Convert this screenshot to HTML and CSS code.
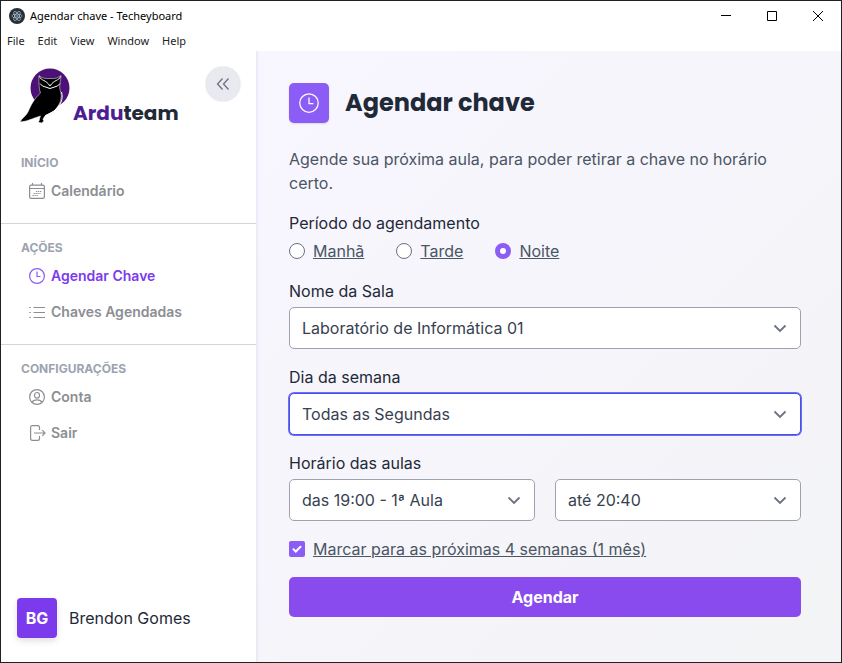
FILE: index.html
```html
<!DOCTYPE html>
<html lang="pt-BR">
<head>
<meta charset="utf-8">
<title>Agendar chave - Techeyboard</title>
<link rel="stylesheet" href="styles.css">
</head>
<body>
<svg class="sprite" aria-hidden="true">
  <symbol id="clock" viewBox="0 0 16 16"><circle cx="8" cy="8" r="7.4"/><path d="M8 3.5V8.5H11.5"/></symbol>
  <symbol id="chevron" viewBox="0 0 20 20"><path d="M4.5 7.5 10 13l5.500-5.500"/></symbol>
</svg>
<div class="window">
  <header class="titlebar">
    <svg class="app-icon" viewBox="0 0 16 16" aria-hidden="true">
      <circle class="app-disc" cx="8" cy="8" r="8"/>
      <g class="app-orbits"><ellipse cx="8" cy="8" rx="5.200" ry="2"/><ellipse cx="8" cy="8" rx="5.200" ry="2" transform="rotate(60 8 8)"/><ellipse cx="8" cy="8" rx="5.200" ry="2" transform="rotate(120 8 8)"/></g>
      <circle class="app-core" cx="8" cy="8" r=".8"/>
    </svg>
    <span class="window-title">Agendar chave - Techeyboard</span>
    <div class="window-controls">
      <button type="button" aria-label="Minimize"><svg viewBox="0 0 10 10"><path d="M0 4.500H10"/></svg></button>
      <button type="button" aria-label="Maximize"><svg viewBox="0 0 10 10"><path d="M.5.5h9v9h-9z"/></svg></button>
      <button type="button" aria-label="Close"><svg viewBox="0 0 10 10"><path d="M0 0 10 10M10 0 0 10"/></svg></button>
    </div>
  </header>
  <nav class="menubar" aria-label="Menu">
    <button type="button">File</button><button type="button">Edit</button><button type="button">View</button><button type="button">Window</button><button type="button">Help</button>
  </nav>
  <div class="body">
    <aside class="sidebar">
      <div class="brand">
        <svg class="owl" viewBox="0 0 50 56" aria-hidden="true">
          <circle cx="30" cy="20" r="19.500" fill="#4c1076"/>
          <path d="M19 7.500C22 10 25 11 30 10.500C35 11 38 10 41 7.500C41 11 40 13 40 15.500C39.500 19 39.500 21 41 25C42 32 39 38 34 43C30 46 27 46 25 48C23.500 50.500 22 51 24 53L21.500 55L18 54C20 53 19 51 20.500 48C14 50 11 51.500 6 53L0 54C2 50 6 48 8 44C11 37 14 31 20.500 25C18.500 20 19 11 19 7.500Z" fill="#000" stroke="#fff" stroke-width=".5"/>
          <path d="M19.500 8.500C21 13 26 11.500 30 18C34 11.500 39 13 40.500 8.500M20 15.500L22.500 18L30 20.500L37.500 18L40 15.500M41.500 24C43.500 31 41 37 34 43L25 48" fill="none" stroke="#fff" stroke-width="1"/>
        </svg>
        <span class="brand-name"><span class="brand-accent">Ardu</span>team</span>
        <button class="collapse" type="button" aria-label="Recolher menu"><svg viewBox="0 0 14 14"><path d="M6.500 1.500 1.500 7l5 5.500M12.500 1.500 7.500 7l5 5.500"/></svg></button>
      </div>
      <nav>
        <section class="group">
          <h2>INÍCIO</h2>
          <a href="#calendario"><svg viewBox="0 0 16 16"><rect x=".6" y="2.100" width="14.800" height="13.300" rx="1.600"/><path d="M.6 5.500h14.800M3.500 0v2.200M12.500 0v2.200"/><path d="M7 8.500h6M4.500 10.500h7M3.500 12.500h6" stroke-dasharray="1.300 .7"/></svg>Calendário</a>
        </section>
        <section class="group">
          <h2>AÇÕES</h2>
          <a class="active" href="#agendar"><svg><use href="#clock"/></svg>Agendar Chave</a>
          <a href="#agendadas"><svg viewBox="0 0 16 16"><path d="M4.500 3.500H16M4.500 8.500H16M4.500 13.500H16M.3 3.500h1.500M.3 8.500h1.500M.3 13.500h1.500"/></svg>Chaves Agendadas</a>
        </section>
        <section class="group">
          <h2>CONFIGURAÇÕES</h2>
          <a href="#conta"><svg viewBox="0 0 16 16"><circle cx="8" cy="8" r="7.400"/><ellipse cx="8" cy="6.300" rx="2.500" ry="2.800"/><path d="M3.200 13.200C4 11.300 6 10.900 8 10.900s4 .4 4.800 2.300"/></svg>Conta</a>
          <a href="#sair"><svg viewBox="0 0 16 16"><path d="M10.500 5V2.500Q10.500.6 8.600.6H3.500Q1.600.6 1.600 2.500v11q0 1.900 1.900 1.900h5.100q1.900 0 1.900-1.900V11M5 8h11M13.300 5.200 16 8l-2.700 2.800"/></svg>Sair</a>
        </section>
      </nav>
      <footer class="user"><span class="avatar">BG</span><span>Brendon Gomes</span></footer>
    </aside>
    <main>
      <div class="heading">
        <span class="heading-icon"><svg><use href="#clock"/></svg></span>
        <h1>Agendar chave</h1>
      </div>
      <form>
        <p>Agende sua próxima aula, para poder retirar a chave no horário certo.</p>
        <fieldset>
          <legend>Período do agendamento</legend>
          <div class="radios">
            <div class="choice"><input type="radio" name="periodo" id="manha"><label for="manha">Manhã</label></div>
            <div class="choice"><input type="radio" name="periodo" id="tarde"><label for="tarde">Tarde</label></div>
            <div class="choice"><input type="radio" name="periodo" id="noite" checked><label for="noite">Noite</label></div>
          </div>
        </fieldset>
        <div class="field">
          <label for="sala">Nome da Sala</label>
          <div class="select"><select id="sala"><option>Laboratório de Informática 01</option></select><svg><use href="#chevron"/></svg></div>
        </div>
        <div class="field">
          <label for="dia">Dia da semana</label>
          <div class="select"><select id="dia" class="focused"><option>Todas as Segundas</option></select><svg><use href="#chevron"/></svg></div>
        </div>
        <div class="field">
          <label for="inicio">Horário das aulas</label>
          <div class="times">
            <div class="select"><select id="inicio"><option>das 19:00 - 1ª Aula</option></select><svg><use href="#chevron"/></svg></div>
            <div class="select"><select id="fim" aria-label="Horário final"><option>até 20:40</option></select><svg><use href="#chevron"/></svg></div>
          </div>
        </div>
        <div class="choice"><span class="check"><input type="checkbox" id="repetir" checked><svg viewBox="0 0 16 16"><path d="m4.500 8.200 2.300 2.300 4.700-4.800"/></svg></span><label for="repetir">Marcar para as próximas 4 semanas (1 mês)</label></div>
        <button class="submit" type="button">Agendar</button>
      </form>
    </main>
  </div>
</div>
</body>
</html>
```
FILE: styles.css
```css
* { box-sizing: border-box; }
body { margin: 0; font: 400 16px/24px Inter, "Liberation Sans", sans-serif; color: #1f2937; }
button, select, input { font: inherit; color: inherit; margin: 0; }
button { border: 0; padding: 0; background: none; }
svg { fill: none; stroke: currentColor; flex: none; }
.sprite { position: absolute; width: 0; height: 0; }
.window { min-height: 100vh; display: flex; flex-direction: column; border: 1px solid #202124; background: #fff; }

.titlebar { display: flex; align-items: center; height: 30px; padding-left: 8px; gap: 5px; font: 400 11px/16px "Noto Sans", sans-serif; color: #000; }
.app-icon { width: 16px; height: 16px; stroke: none; }
.app-disc { fill: #2b2e3a; }
.app-orbits { fill: none; stroke: #b5d5dc; stroke-width: .6; }
.app-core { fill: #b5d5dc; }
.window-controls { margin-left: auto; display: flex; align-self: stretch; }
.window-controls button { width: 46px; display: grid; place-items: center; }
.window-controls svg { width: 10px; height: 10px; overflow: visible; }
.menubar { display: flex; gap: 13px; height: 20px; padding-left: 6px; font: 400 11px/20px "Noto Sans", sans-serif; color: #222; }

.body { flex: 1; display: flex; }
.sidebar { width: 256px; flex: none; display: flex; flex-direction: column; z-index: 1; background: #fff; border-right: 1px solid #ebe9f5; box-shadow: 0 1px 3px rgb(80 60 150 / 12%); clip-path: inset(0 -6px 0 0); }
.brand { display: flex; align-items: flex-end; gap: 3px; height: 102px; padding: 0 16px 29px 19px; }
.owl { width: 50px; height: 56px; stroke: none; }
.brand-name { font: 700 20px/22px Poppins, Inter, sans-serif; }
.brand-accent { color: #4c1d95; }
.collapse { align-self: flex-start; margin: 16px 0 0 auto; width: 34px; height: 34px; flex: none; display: grid; place-items: center; border-radius: 50%; background: #e9eaef; color: #6b7280; box-shadow: 0 0 2px #c5c8ce; }
.collapse svg { width: 14px; height: 14px; stroke-width: 1.3; }

.group { padding: 15px 0 14px; border-bottom: 1px solid #d1d5db; }
.group:first-child { padding-top: 1px; }
.group:last-child { border: 0; }
.group h2 { margin: 0 0 1px; padding-left: 20px; font-size: 12px; line-height: 18px; font-weight: 700; color: #9ca3af; }
.group a { display: flex; align-items: center; gap: 6px; height: 36px; padding-left: 28px; font-size: 14px; line-height: 20px; font-weight: 600; color: #8b8e92; text-decoration: none; }
.group a svg { width: 16px; height: 16px; stroke-width: 1.2; overflow: visible; }
.group .active { color: #7c3aed; }
.group .active svg { color: #8b5cf6; }
.user { margin-top: auto; padding: 0 16px 24px; display: flex; align-items: center; gap: 12px; }
.avatar { width: 40px; height: 40px; border-radius: 4px; display: grid; place-items: center; background: #7c3aed; color: #fff; font-weight: 700; box-shadow: 0 3px 6px rgb(0 0 0 / 12%); }

main { flex: 1; min-width: 0; padding: 32px 40px 32px 32px; background: linear-gradient(135deg, #f8f6ff, #f3f4f6); }
.heading { display: flex; align-items: center; gap: 16px; margin-bottom: 24px; }
.heading-icon { width: 40px; height: 40px; border-radius: 5px; display: grid; place-items: center; background: #8b5cf6; color: #fff; box-shadow: 0 1px 2px rgb(0 0 0 / 12%); }
.heading-icon svg { width: 20px; height: 20px; }
h1 { margin: 0; font: 700 24px/32px Poppins, Inter, sans-serif; }
form { display: flex; flex-direction: column; gap: 16px; }
form p { margin: 0; color: #4b5563; }
fieldset { border: 0; margin: 0; padding: 0; min-width: 0; }
legend { padding: 0; margin-bottom: 4px; }
.radios { display: flex; gap: 32px; }
.choice { display: flex; align-items: center; gap: 8px; color: #4b5563; text-decoration: underline; }
.choice input { appearance: none; display: block; width: 16px; height: 16px; border: 1px solid #6b7280; background: #fff; }
.choice input[type=radio] { border-radius: 50%; }
.choice input[type=radio]:checked { border: 5px solid #8b5cf6; }
.choice input[type=checkbox] { border: 0; border-radius: 2px; background: #8b5cf6; }
.check { display: grid; }
.check > * { grid-area: 1 / 1; }
.check svg { width: 16px; height: 16px; color: #fff; stroke-width: 2; stroke-linecap: round; pointer-events: none; }
.field { display: flex; flex-direction: column; gap: 4px; }
.select { display: grid; align-items: center; }
.select > * { grid-area: 1 / 1; }
.select svg { justify-self: end; margin-right: 11px; width: 20px; height: 20px; color: #6b7280; stroke-width: 1.8; pointer-events: none; }
select { appearance: none; width: 100%; min-width: 0; height: 42px; padding: 8px 40px 8px 12px; border: 1px solid #9ca3af; border-radius: 5px; background: #fff; color: #374151; }
.focused { border-color: #2563eb; box-shadow: 0 0 0 1px #8b5cf6; }
.times { display: grid; grid-template-columns: 1fr 1fr; gap: 20px; }
.submit { height: 40px; border-radius: 5px; background: #894bee; color: #fff; font-weight: 700; }
```
